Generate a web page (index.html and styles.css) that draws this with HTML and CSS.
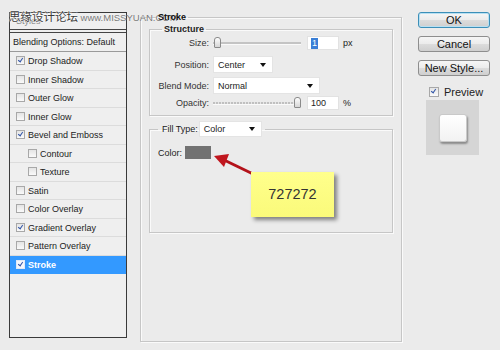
FILE: index.html
```html
<!DOCTYPE html>
<html lang="en">
<head>
<meta charset="UTF-8">
<title>Layer Style - Stroke</title>
<link rel="stylesheet" href="styles.css">
</head>
<body>

<div class="watermark"><span class="wm-cn">思缘设计论坛</span> <span class="wm-en">www.MISSYUAN.COM</span></div>

<div class="dialog">

  <!-- left: styles list -->
  <div class="styles-list">
    <div class="list-head">Styles</div>
    <div class="list-item blend">Blending Options: Default</div>
    <div class="list-item"><span class="cb on"></span>Drop Shadow</div>
    <div class="list-item"><span class="cb"></span>Inner Shadow</div>
    <div class="list-item"><span class="cb"></span>Outer Glow</div>
    <div class="list-item"><span class="cb"></span>Inner Glow</div>
    <div class="list-item"><span class="cb on"></span>Bevel and Emboss</div>
    <div class="list-item sub"><span class="cb"></span>Contour</div>
    <div class="list-item sub"><span class="cb"></span>Texture</div>
    <div class="list-item"><span class="cb"></span>Satin</div>
    <div class="list-item"><span class="cb"></span>Color Overlay</div>
    <div class="list-item"><span class="cb on"></span>Gradient Overlay</div>
    <div class="list-item"><span class="cb"></span>Pattern Overlay</div>
    <div class="list-item selected"><span class="cb on"></span>Stroke</div>
  </div>

  <!-- middle: stroke settings -->
  <fieldset class="group stroke">
    <legend class="title">Stroke</legend>

    <fieldset class="group structure">
      <legend class="title">Structure</legend>
      <div class="rows">
        <div class="row r-size">
          <label>Size:</label>
          <div class="ctrl">
            <div class="slider"><span class="thumb"></span></div>
            <div class="num"><span class="sel-text">1</span></div>
            <span class="unit">px</span>
          </div>
        </div>
        <div class="row r-pos">
          <label>Position:</label>
          <div class="ctrl"><div class="select w-pos">Center<span class="caret"></span></div></div>
        </div>
        <div class="row r-blend">
          <label>Blend Mode:</label>
          <div class="ctrl"><div class="select w-blend">Normal<span class="caret"></span></div></div>
        </div>
        <div class="row r-op">
          <label>Opacity:</label>
          <div class="ctrl">
            <div class="slider dotted"><span class="thumb right"></span></div>
            <div class="num">100</div>
            <span class="unit">%</span>
          </div>
        </div>
      </div>
    </fieldset>

    <fieldset class="group fill">
      <legend class="fill-legend">Fill Type: <span class="select w-fill">Color<span class="caret"></span></span></legend>
      <div class="color-row">Color: <span class="swatch"></span></div>
    </fieldset>
  </fieldset>

  <!-- right: buttons -->
  <div class="side">
    <div class="btn default">OK</div>
    <div class="btn">Cancel</div>
    <div class="btn">New Style...</div>
    <div class="preview-check"><span class="cb on"></span>Preview</div>
    <div class="preview-box"><div class="preview-tile"></div></div>
  </div>

</div>

<!-- annotation -->
<svg class="arrow" width="60" height="40" viewBox="0 0 60 40">
  <line x1="49" y1="32" x2="20" y2="18" stroke="#b3121a" stroke-width="3" stroke-linecap="round"/>
  <polygon points="12,15 27,13 22,26" fill="#c0161e"/>
</svg>
<div class="note">727272</div>

</body>
</html>
```

FILE: styles.css
```css
/* Layer style dialog */
body {
  margin: 0;
  width: 500px;
  height: 350px;
  overflow: hidden;
  background: #ebebeb;
  font-family: 'Liberation Sans', Arial, sans-serif;
  font-size: 9px;
  color: #222;
}

.dialog {
  display: flex;
  align-items: flex-start;
  padding-top: 12px;
}

/* watermark over the top edge */
.watermark {
  position: absolute;
  left: 9px;
  top: 8px;
  z-index: 5;
  white-space: nowrap;
  color: #3a3a3a;
  text-shadow: 0 0 2px #fff, 0 0 2px #fff, 0 0 1px #fff;
}

.wm-cn {
  font-family: 'Noto Sans CJK SC', sans-serif;
  font-size: 11.5px;
}

.wm-en {
  font-size: 9.5px;
  color: #777;
  text-shadow: 0 0 1px #fff;
}

/* checkbox */
.cb {
  display: inline-block;
  position: relative;
  width: 7px;
  height: 7px;
  border: 1px solid #a8a8a8;
  background: linear-gradient(#e4e4e4, #fafafa);
  margin-right: 3px;
  vertical-align: -1px;
}

.cb.on::after {
  content: "";
  position: absolute;
  left: 2px;
  top: 0;
  width: 2px;
  height: 4px;
  border: solid #3457a8;
  border-width: 0 1.5px 1.5px 0;
  transform: rotate(35deg);
}

/* styles list */
.styles-list {
  margin-left: 9px;
  width: 116px;
  height: 324px;
  border: 1px solid #3a3a3a;
  background: #efefef;
}

.list-head {
  height: 16px;
  line-height: 17px;
  padding-left: 6px;
  color: #888;
  border-bottom: 1px solid #444;
  margin-bottom: 2px;
}

.list-item {
  height: 17.5px;
  line-height: 18px;
  padding-left: 6px;
  border-bottom: 1px solid #dcdcdc;
  white-space: nowrap;
}

.list-item.blend {
  height: 18px;
  line-height: 19px;
  padding-left: 3px;
  border-top: 1px solid #444;
  border-bottom: 1px solid #9a9a9a;
}

.list-item.sub {
  padding-left: 18px;
}

.list-item.selected {
  background: #3399ff;
  color: #fff;
  font-weight: bold;
  border-bottom-color: #3399ff;
}

.list-item.selected .cb {
  border-color: #dfe9f7;
  background: #f4f7fc;
}

/* fieldsets */
.group {
  margin: 0;
  border: 1px solid #c6c6c6;
  box-shadow: 1px 1px 0 #fafafa, inset 1px 1px 0 #fafafa;
  padding: 0;
}

.title {
  font-weight: bold;
  padding: 0 2px;
  line-height: 11px;
}

.stroke {
  margin-left: 13px;
  width: 244px;
  height: 328px;
  padding: 0 8px;
}

.stroke > .title {
  margin-left: 7px;
  position: relative;
  z-index: 6;
  color: #111;
}

.structure {
  width: 242px;
  margin-top: 1px;
  padding: 1px 0 5px;
}

.structure > .title {
  margin-left: 12px;
}

.rows {
  display: flex;
  flex-direction: column;
}

.row {
  display: grid;
  grid-template-columns: 59px 1fr;
  column-gap: 4px;
  align-items: center;
}

.row label {
  text-align: right;
  color: #333;
}

.r-size { height: 14px; }
.r-pos { height: 17px; margin-top: 6px; }
.r-blend { height: 17px; margin-top: 4px; }
.r-op { height: 14px; margin-top: 2px; }

.ctrl {
  display: flex;
  align-items: center;
}

.slider {
  position: relative;
  width: 88px;
  height: 2px;
  background: #c4c4c4;
  border-bottom: 1px solid #fafafa;
}

.slider.dotted {
  background: repeating-linear-gradient(90deg, #c0c0c0 0 2px, #e6e6e6 2px 3px);
}

.thumb {
  position: absolute;
  left: 1px;
  top: -5px;
  width: 5px;
  height: 9px;
  border: 1px solid #8a8a8a;
  border-radius: 3px 3px 1px 1px;
  background: linear-gradient(#fdfdfd, #d6d6d6);
}

.thumb.right {
  left: 81px;
}

.num {
  margin-left: 6px;
  width: 27px;
  height: 12px;
  line-height: 13px;
  padding-left: 3px;
  background: #fff;
  border: 1px solid #e2e2e2;
}

.sel-text {
  display: inline-block;
  background: #3b7fd6;
  color: #fff;
  padding: 0 1px;
  line-height: 11px;
}

.unit {
  margin-left: 4px;
}

.select {
  display: inline-flex;
  align-items: center;
  height: 17px;
  padding-left: 4px;
  background: #fff;
  border: 1px solid #e4e4e4;
  box-sizing: border-box;
}

.w-pos { width: 60px; }
.w-blend { width: 107px; }
.w-fill { width: 63px; height: 16px; margin-left: 1px; }

.caret {
  margin-left: auto;
  margin-right: 6px;
  border-left: 3px solid transparent;
  border-right: 3px solid transparent;
  border-top: 4px solid #111;
}

.fill {
  width: 226px;
  height: 101px;
  margin-top: 5px;
  padding: 9px 8px 0;
}

.fill-legend {
  padding: 0 3px 0 4px;
  line-height: 16px;
  display: flex;
  align-items: center;
}

.color-row {
  display: flex;
  align-items: center;
  height: 13px;
}

.swatch {
  margin-left: 3px;
  width: 26px;
  height: 13px;
  background: #727272;
}

/* buttons */
.side {
  margin-left: 16px;
  width: 72px;
  display: flex;
  flex-direction: column;
  font-size: 11px;
}

.btn {
  height: 14px;
  line-height: 14px;
  text-align: center;
  border: 1px solid #8e8e8e;
  border-radius: 3px;
  background: linear-gradient(#f6f6f6 0%, #ebebeb 50%, #dcdcdc 51%, #cfcfcf 100%);
  margin-bottom: 8px;
  color: #111;
}

.btn.default {
  border-color: #3c8fb8;
  box-shadow: 0 0 0 1px #b8e0f2 inset;
}

.preview-check {
  margin-top: 1px;
  padding-left: 11px;
  height: 14px;
  line-height: 14px;
  white-space: nowrap;
}

.preview-check .cb {
  width: 8px;
  height: 8px;
  margin-right: 5px;
}

.preview-box {
  margin-top: 1px;
  margin-left: 8px;
  width: 53px;
  height: 55px;
  background: #d5d5d5;
  display: flex;
  align-items: center;
  justify-content: center;
}

.preview-tile {
  width: 26px;
  height: 26px;
  background: linear-gradient(#ffffff, #f2f2f2);
  border: 1px solid #c9c9c9;
  border-radius: 3px;
  box-shadow: 1px 2px 2px rgba(0, 0, 0, 0.35);
}

/* annotation */
.arrow {
  position: absolute;
  left: 202px;
  top: 141px;
}

.note {
  position: absolute;
  left: 251px;
  top: 172px;
  width: 83px;
  height: 45px;
  line-height: 45px;
  text-align: center;
  font-size: 14.5px;
  color: #333;
  background: linear-gradient(#ffff8c, #fafa7a);
  box-shadow: 3px 3px 4px rgba(0, 0, 0, 0.45);
}
```
